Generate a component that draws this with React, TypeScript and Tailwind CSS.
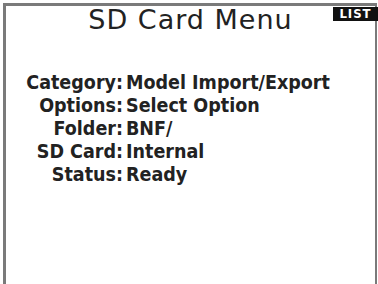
import React from 'react';

const rows: [string, string][] = [
  ['Category:', 'Model Import/Export'],
  ['Options:', 'Select Option'],
  ['Folder:', 'BNF/'],
  ['SD Card:', 'Internal'],
  ['Status:', 'Ready'],
];

export default function App() {
  return (
    <div className="w-[378px] h-[284px] bg-white pt-[3px] pl-[3px] pr-[1px] overflow-hidden">
      <div
        className="relative h-full border-t-[3px] border-l-[3px] border-r-[2px] border-[#7a7a7a] text-[#222]"
        style={{ fontFamily: '"DejaVu Sans Condensed", "DejaVu Sans", sans-serif' }}
      >
        <div className="absolute right-[-3px] top-[1px] h-[14px] w-[45px] bg-[#111] text-white text-[13px] font-bold leading-[14px] text-center tracking-[1px]">
          LIST
        </div>
        <h1
          className="text-center text-[27px] leading-[30px] mt-[-1px] font-normal tracking-[1px]"
          style={{ fontFamily: '"DejaVu Sans", sans-serif' }}
        >
          SD Card Menu
        </h1>
        <div className="mt-[36px] grid grid-cols-[117px_1fr] text-[19.5px] leading-[23px] font-bold">
          {rows.map(([k, v]) => (
            <React.Fragment key={k}>
              <div className="text-right">{k}</div>
              <div className="pl-[3px]">{v}</div>
            </React.Fragment>
          ))}
        </div>
      </div>
    </div>
  );
}
